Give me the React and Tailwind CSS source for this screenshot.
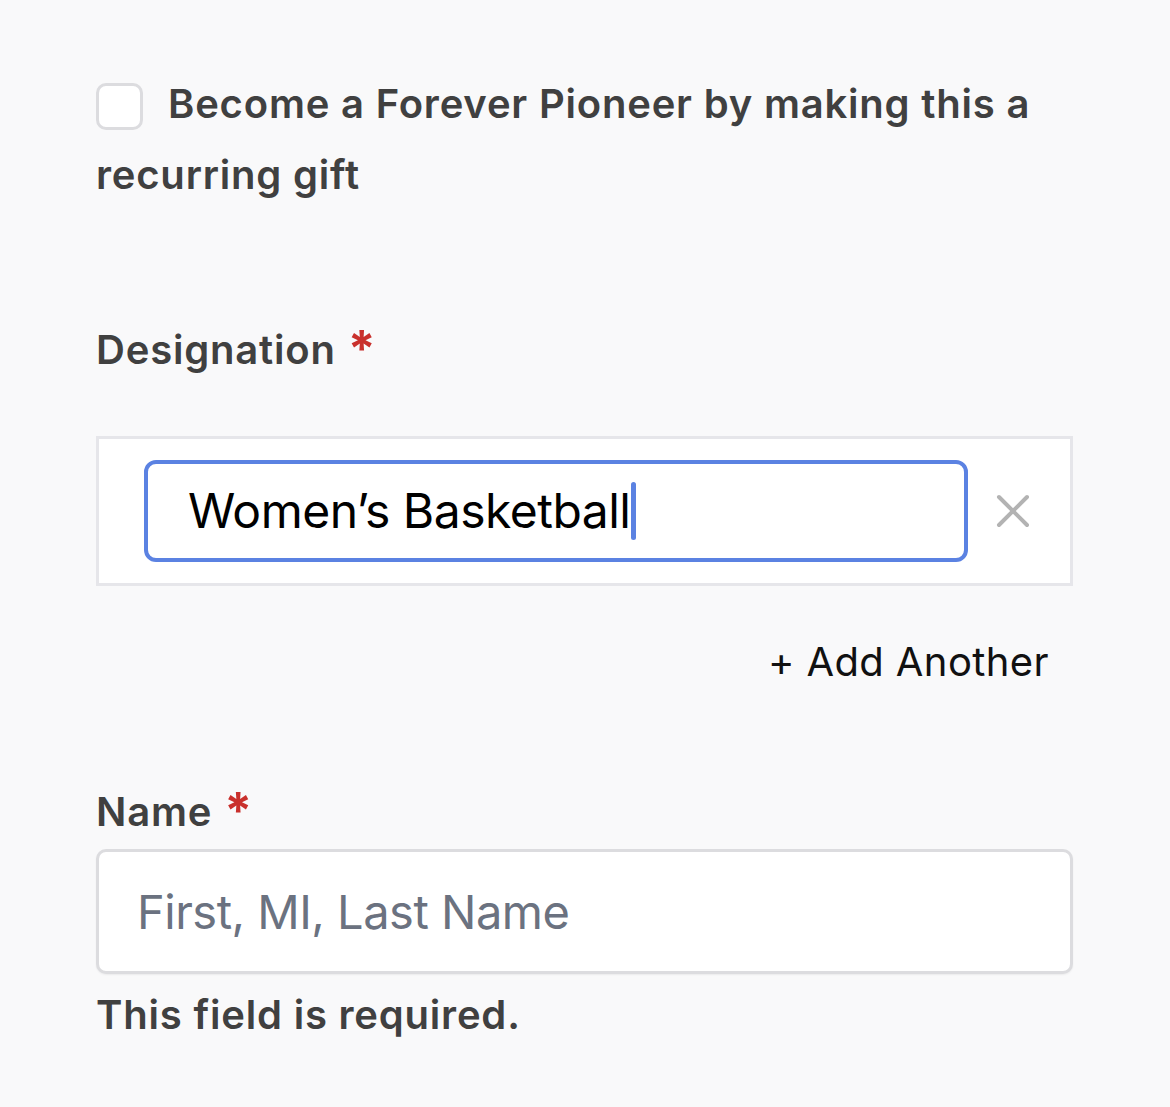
import React from "react";

const labelCls = "text-[40px] font-semibold tracking-[0.02em] text-[#404040]";

function Req() {
  return <span className="ml-[12px] align-top text-[50px] font-bold leading-[48px] text-[#c9302c] relative -top-[2px]">*</span>;
}

export default function App() {
  return (
    <div className="min-h-[1107px] w-[1170px] bg-[#f9f9fa] pl-[96px] pr-[97px] overflow-hidden" style={{ fontFamily: "Inter, 'Noto Sans', sans-serif" }}>
      {/* recurring gift */}
      <div className={`pt-[68px] leading-[71px] ${labelCls}`}>
        <span className="inline-block align-[-12px] mr-[25px] h-[47px] w-[47px] rounded-[10px] border-[3px] border-[#dcdcdf] bg-white" />
        Become a Forever Pioneer by making this a recurring gift
      </div>

      {/* designation */}
      <div className={`mt-[116px] h-[48px] leading-[48px] ${labelCls}`}>
        Designation
        <Req />
      </div>

      <div className="mt-[62px] flex items-center border-[3px] border-[#e6e6ea] bg-white pl-[45px] pr-[40px] py-[21px]">
        <div className="flex h-[102px] flex-1 items-center rounded-[12px] border-[4px] border-[#5b82e2] pl-[40px]">
          <span className="text-[48px] tracking-[-0.5px] text-black leading-none">Women’s Basketball</span>
          <span className="ml-[1px] h-[58px] w-[5px] rounded-full bg-[#5b82e2]" />
        </div>
        <svg className="ml-[28px]" width="34" height="34" viewBox="0 0 34 34">
          <path d="M3 3 L31 31 M31 3 L3 31" stroke="#b3b3b3" strokeWidth="4" strokeLinecap="round" />
        </svg>
      </div>

      <div className="mt-[48px] flex justify-end pr-[24px]">
        <span className="text-[40px] tracking-[0.01em] leading-[56px] text-[#111]">+ Add Another</span>
      </div>

      {/* name */}
      <div className={`mt-[98px] h-[48px] leading-[48px] ${labelCls}`}>
        Name
        <Req />
      </div>
      <div className="mt-[13px] flex h-[125px] items-center rounded-[10px] border-[3px] border-[#dcdcdf] bg-white pl-[38px] shadow-[0_1px_2px_rgba(0,0,0,0.06)]">
        <span className="text-[47px] tracking-[-0.5px] text-[#6b7280] leading-none">First, MI, Last Name</span>
      </div>
      <div className={`mt-[16px] leading-[50px] ${labelCls}`}>This field is required.</div>
    </div>
  );
}
